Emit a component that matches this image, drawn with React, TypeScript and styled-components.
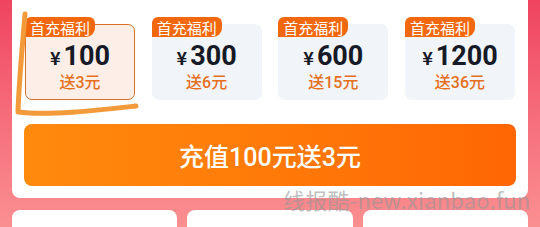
import React from "react";
import styled, { createGlobalStyle } from "styled-components";

const Global = createGlobalStyle`
  html, body { margin: 0; padding: 0; }
  body {
    width: 540px;
    height: 227px;
    overflow: hidden;
    font-family: "Roboto", "Noto Sans CJK SC", sans-serif;
    background: linear-gradient(180deg, #ef4460 0%, #f6707d 55%, #fa8f90 100%);
  }
`;

const Page = styled.div`
  position: relative;
  width: 540px;
  height: 227px;
  padding: 0 12px;
  box-sizing: border-box;
  display: flex;
  flex-direction: column;
  overflow: hidden;
`;

const Panel = styled.div`
  background: #fff;
  border-radius: 0 0 8px 8px;
  padding: 24px 12px 12px;
  display: flex;
  flex-direction: column;
  gap: 24px;
`;

const Options = styled.div`
  display: grid;
  grid-template-columns: repeat(4, 110px);
  justify-content: space-between;
  padding: 0 1px;
`;

const Option = styled.div<{ $active?: boolean }>`
  position: relative;
  height: 76px;
  box-sizing: border-box;
  border-radius: 7px;
  background: ${(p) => (p.$active ? "#fdefe8" : "#f1f4f8")};
  border: ${(p) => (p.$active ? "1.5px solid #d8702c" : "1.5px solid transparent")};
  display: flex;
  flex-direction: column;
  align-items: center;
  justify-content: center;
  padding-top: 10px;
`;

const Tag = styled.div`
  position: absolute;
  left: -1px;
  top: -8px;
  height: 20px;
  padding: 0 5px;
  display: flex;
  align-items: center;
  background: #f3680d;
  color: #fff;
  font-family: "Noto Sans CJK SC", sans-serif;
  font-size: 15px;
  border-radius: 6px 6px 9px 0;
  line-height: 1;
`;

const Price = styled.div`
  display: flex;
  align-items: baseline;
  color: #161a26;
  font-weight: 700;
  line-height: 1;
`;

const Yen = styled.span`
  font-size: 18px;
  font-weight: 700;
  margin-right: 3px;
  font-family: "Noto Sans CJK SC", sans-serif;
`;

const Amount = styled.span`
  font-size: 27px;
  font-family: "Roboto", sans-serif;
  font-weight: 700;
`;

const Bonus = styled.div`
  margin-top: 5px;
  color: #e66f1e;
  font-size: 16px;
  font-weight: 500;
  line-height: 1;
`;

const Button = styled.button`
  height: 62px;
  border: none;
  border-radius: 8px;
  background: linear-gradient(90deg, #ff8a0e 0%, #ff7a08 50%, #ff6604 100%);
  color: #fff;
  font-family: "Roboto", "Noto Sans CJK SC", sans-serif;
  font-size: 25px;
  font-weight: 500;
  display: flex;
  align-items: center;
  justify-content: center;
  padding: 0;
`;

const Lower = styled.div`
  margin-top: 12px;
  display: grid;
  grid-template-columns: repeat(3, 1fr);
  gap: 10px;
`;

const LowerCard = styled.div`
  height: 17px;
  background: #fff;
  border-radius: 8px 8px 0 0;
`;

const Watermark = styled.div`
  position: absolute;
  left: 283px;
  top: 183px;
  font-family: "Noto Sans CJK SC", sans-serif;
  font-size: 22px;
  color: rgba(150, 150, 150, 0.62);
  white-space: nowrap;
  letter-spacing: 0.2px;
`;

const Scribble = styled.svg`
  position: absolute;
  left: 0;
  top: 0;
  pointer-events: none;
`;

const items = [
  { amount: "100", bonus: "送3元" },
  { amount: "300", bonus: "送6元" },
  { amount: "600", bonus: "送15元" },
  { amount: "1200", bonus: "送36元" },
];

export default function App() {
  return (
    <>
      <Global />
      <Page>
        <Panel>
          <Options>
            {items.map((it, i) => (
              <Option key={it.amount} $active={i === 0}>
                <Tag>首充福利</Tag>
                <Price>
                  <Yen>¥</Yen>
                  <Amount>{it.amount}</Amount>
                </Price>
                <Bonus>{it.bonus}</Bonus>
              </Option>
            ))}
          </Options>
          <Button>充值100元送3元</Button>
        </Panel>
        <Lower>
          <LowerCard />
          <LowerCard />
          <LowerCard />
        </Lower>
        <Scribble width="540" height="227" viewBox="0 0 540 227">
          <path
            d="M25 14 C23 40 19 80 18 112 C50 116 100 110 136 106"
            fill="none"
            stroke="#f39a3a"
            strokeWidth="5"
            strokeLinecap="round"
            strokeLinejoin="round"
          />
        </Scribble>
        <Watermark>线报酷-new.xianbao.fun</Watermark>
      </Page>
    </>
  );
}
